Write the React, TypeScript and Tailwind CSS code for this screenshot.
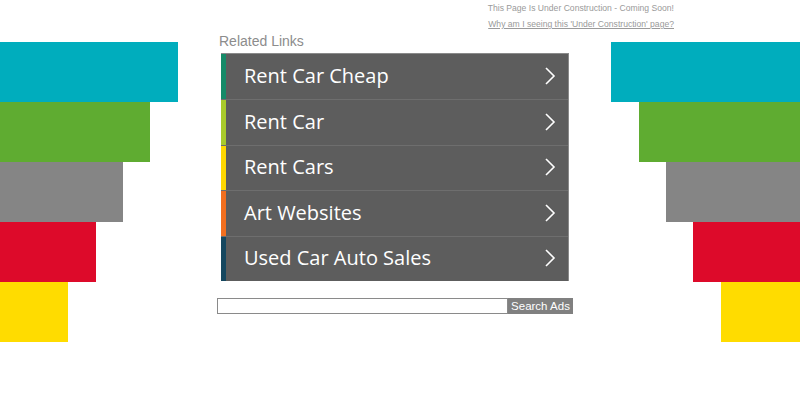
const bars = [
  { color: 'bg-[#00adbd]', left: 'w-[178px]', right: 'w-[189px]' },
  { color: 'bg-[#5fac31]', left: 'w-[150px]', right: 'w-[161px]' },
  { color: 'bg-[#858585]', left: 'w-[123px]', right: 'w-[134px]' },
  { color: 'bg-[#dd0a2a]', left: 'w-[96px]', right: 'w-[107px]' },
  { color: 'bg-[#ffdc00]', left: 'w-[68px]', right: 'w-[79px]' },
]

const links = [
  { label: 'Rent Car Cheap', strip: 'bg-[#168a68]' },
  { label: 'Rent Car', strip: 'bg-[#a9cb2c]' },
  { label: 'Rent Cars', strip: 'bg-[#ffd800]' },
  { label: 'Art Websites', strip: 'bg-[#f26f1f]' },
  { label: 'Used Car Auto Sales', strip: 'bg-[#15475f]' },
]

const Chevron = () => (
  <svg width="12" height="20" viewBox="0 0 12 20" fill="none">
    <path d="M2 2 L10 10 L2 18" stroke="#ffffff" strokeWidth="1.6" />
  </svg>
)

const App = () => {
  return (
    <div className="w-[800px] h-[412px] bg-white overflow-hidden font-['Liberation_Sans',Arial,sans-serif]">
      {/* Header notice */}
      <div className="flex flex-col items-end pr-[126px] h-[33px] text-[8.6px] leading-[16px] text-[#9a9a9a]">
        <p>This Page Is Under Construction - Coming Soon!</p>
        <a href="#" className="underline">Why am I seeing this 'Under Construction' page?</a>
      </div>

      <div className="flex">
        {/* left bars */}
        <div className="w-[178px] pt-[9px] flex flex-col">
          {bars.map((b, i) => (
            <div key={i} className={`${b.color} ${b.left} h-[60px]`} />
          ))}
        </div>

        {/* center */}
        <div className="ml-[39px] w-[356px] flex flex-col">
          <h2 className="pl-[2px] h-[20px] text-[14px] leading-[16px] text-[#8c8c8c]">Related Links</h2>
          <ul className="ml-[4px] w-[348px] border-t border-r border-[#8a8a8a] bg-[#5d5d5d]">
            {links.map((l, i) => (
              <li key={i} className={`flex h-[45.4px] ${i > 0 ? 'border-t border-[#6e6e6e]' : ''}`}>
                <div className={`w-[5px] ${l.strip}`} />
                <a href="#" className="flex flex-1 items-center justify-between pl-[18px] pr-[12px] pb-[1px] text-white text-[20px] font-['Open_Sans',sans-serif]">
                  <span>{l.label}</span>
                  <Chevron />
                </a>
              </li>
            ))}
          </ul>
          <form className="flex mt-[17px] h-[16px]" onSubmit={e => e.preventDefault()}>
            <input className="w-[291px] h-[16px] border border-[#8a8a8a] bg-white outline-none" />
            <button className="w-[65px] h-[16px] bg-[#808080] text-white text-[11.5px] leading-[16px]">Search Ads</button>
          </form>
        </div>

        {/* right bars */}
        <div className="ml-auto w-[189px] pt-[9px] flex flex-col items-end">
          {bars.map((b, i) => (
            <div key={i} className={`${b.color} ${b.right} h-[60px]`} />
          ))}
        </div>
      </div>
    </div>
  )
}

export default App
